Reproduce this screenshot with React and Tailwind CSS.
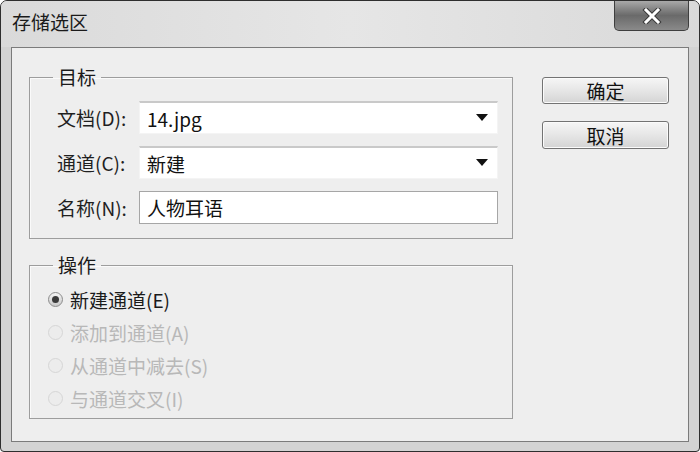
import React from "react";

const FONT = { fontFamily: '"Noto Sans CJK SC", "Noto Sans", sans-serif' };

const Caret = () => (
  <svg width="12" height="8" viewBox="0 0 12 8" className="shrink-0">
    <path d="M0 0 H12 L6 7 Z" fill="#111" />
  </svg>
);

const CloseX = () => (
  <svg width="20" height="16" viewBox="0 0 20 16">
    <path d="M4 2 L16 14 M16 2 L4 14" stroke="#3a3a3a" strokeWidth="5" strokeLinecap="square" />
    <path d="M4 2 L16 14 M16 2 L4 14" stroke="#ffffff" strokeWidth="3" strokeLinecap="square" />
  </svg>
);

const Radio = ({ checked, disabled, label }) => (
  <div className="flex items-center h-[33px] gap-[7px]">
    <span
      className={`w-[15px] h-[15px] rounded-full border flex items-center justify-center ${
        disabled
          ? "border-[#d6d6d6] bg-[#ececec]"
          : "border-[#8c8c8c] bg-gradient-to-b from-[#f4f4f4] to-[#c9c9c9]"
      }`}
    >
      {checked && <span className="w-[7px] h-[7px] rounded-full bg-[#3a3a3a]" />}
    </span>
    <span className={`text-[19px] leading-none ${disabled ? "text-[#b8b8b8]" : "text-[#1a1a1a]"}`}>
      {label}
    </span>
  </div>
);

const Field = ({ label, value, select, last }) => (
  <div className="flex items-center">
    <span className="w-[82px] text-[19px] text-[#1f1f1f] leading-none">{label}</span>
    <div
      className={`w-[359px] h-[33px] bg-white flex items-center justify-between pl-[7px] pr-[9px] ${
        last ? "border border-[#a6a6a6]" : "border-t-2 border-[#c9c9c9] border-x border-x-[#f4f4f4] border-b border-b-[#f4f4f4]"
      }`}
    >
      <span className="text-[19px] text-[#111] leading-none">{value}</span>
      {select && <Caret />}
    </div>
  </div>
);

const Group = ({ title, children, className }) => (
  <fieldset className={`border border-[#9d9d9d] shadow-[inset_1px_1px_0_#fafafa] w-[484px] ${className}`}>
    <legend className="ml-[23px] px-[5px] text-[19px] leading-[24px] text-[#1a1a1a]">{title}</legend>
    {children}
  </fieldset>
);

const Button = ({ children, h }) => (
  <button
    className={`w-[127px] ${h} rounded-[3px] border border-[#737373] bg-gradient-to-b from-[#f6f6f6] via-[#e6e6e6] to-[#d4d4d4] shadow-[inset_0_0_0_1px_#fbfbfb] text-[19px] leading-none text-[#111]`}
  >
    {children}
  </button>
);

export default function App() {
  return (
    <div style={FONT} className="w-[700px] h-[452px] bg-white">
      <div className="w-[700px] h-[452px] flex flex-col rounded-t-[7px] rounded-b-[4px] border border-[#2e2e2e] bg-[#d3d3d3] overflow-hidden">
        <div className="h-[46px] flex justify-between bg-gradient-to-r from-[#dadada] via-[#e6e6e6] to-[#d9d9d9]">
          <span className="pl-[11px] pt-[9px] text-[19px] leading-[24px] text-[#1a1a1a]">存储选区</span>
          <div className="mr-[10px] w-[75px] h-[30px] rounded-b-[5px] border border-t-0 border-[#3e3e3e] bg-gradient-to-b from-[#a9a9a9] via-[#6a6a6a] to-[#8a8a8a] flex items-center justify-center">
            <CloseX />
          </div>
        </div>
        <div className="flex-1 px-[10px] pb-[9px]">
          <div className="h-full border border-[#7b7b7b] bg-[#eeeeee] flex pl-[17px]">
            <div className="flex flex-col">
              <Group title="目标" className="mt-[17px] pb-[14px]">
                <div className="flex flex-col gap-[12px] mt-[12px] pl-[27px]">
                  <Field label="文档(D):" value="14.jpg" select />
                  <Field label="通道(C):" value="新建" select />
                  <Field label="名称(N):" value="人物耳语" last />
                </div>
              </Group>
              <Group title="操作" className="mt-[14px] pb-[3px]">
                <div className="flex flex-col mt-[6px] pl-[18px]">
                  <Radio checked label="新建通道(E)" />
                  <Radio disabled label="添加到通道(A)" />
                  <Radio disabled label="从通道中减去(S)" />
                  <Radio disabled label="与通道交叉(I)" />
                </div>
              </Group>
            </div>
            <div className="flex flex-col gap-[17px] ml-[29px] mt-[29px]">
              <Button h="h-[27px]">确定</Button>
              <Button h="h-[28px]">取消</Button>
            </div>
          </div>
        </div>
      </div>
    </div>
  );
}
